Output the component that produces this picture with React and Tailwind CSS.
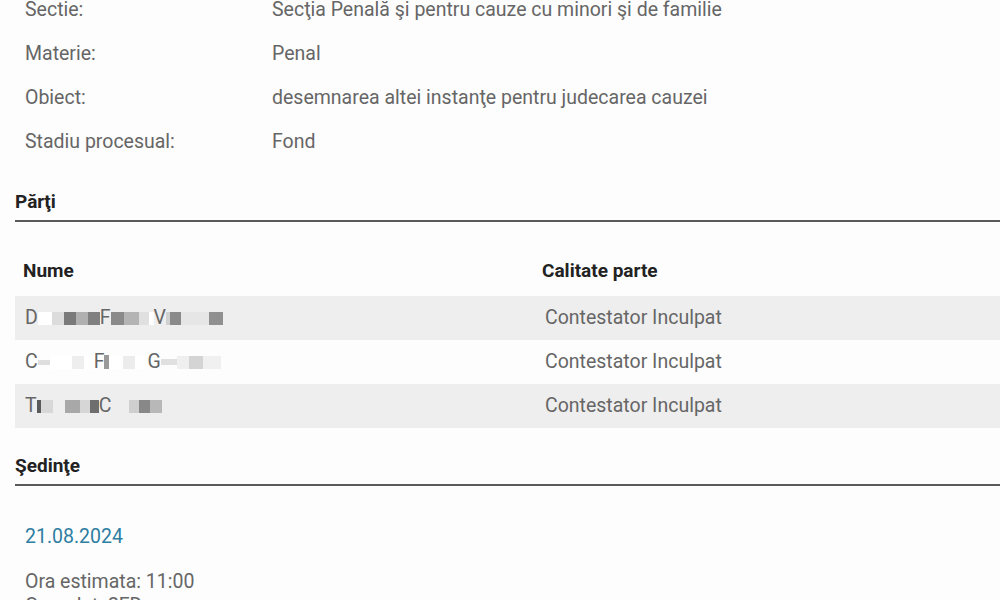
const details = [
  ['Sectie:', 'Secţia Penală şi pentru cauze cu minori şi de familie'],
  ['Materie:', 'Penal'],
  ['Obiect:', 'desemnarea altei instanţe pentru judecarea cauzei'],
  ['Stadiu procesual:', 'Fond'],
];

// names are pixelated in the source, so they are drawn as letters + blur blocks
const parties = [
  {
    name: [
      { t: 'D' }, { w: 14, c: '#fff' }, { w: 12, c: '#dcdcdc' }, { w: 12, c: '#7a7a7a' }, { w: 12, c: '#b0b0b0' }, { w: 12, c: '#808080' },
      { t: 'F' }, { w: 13, c: '#8a8a8a' }, { w: 15, c: '#b4b4b4' }, { w: 10, c: '#e0e0e0' }, { w: 5, c: '#fff' },
      { t: 'V' }, { w: 4, c: '#d0d0d0' }, { w: 11, c: '#8a8a8a' }, { w: 28, c: '#e6e6e6' }, { w: 14, c: '#909090' },
    ],
    role: 'Contestator Inculpat',
  },
  {
    name: [
      { t: 'C' }, { w: 12, c: '#dedede', h: 5 }, { w: 22, c: '#fff' }, { w: 12, c: '#eeeeee' }, { w: 10, c: '#fff' },
      { t: 'F' }, { w: 5, c: '#9a9a9a', h: 14 }, { w: 14, c: '#fff' }, { w: 12, c: '#ececec' }, { w: 12, c: '#fff' },
      { t: 'G' }, { w: 16, c: '#e0e0e0', h: 6 }, { w: 12, c: '#efefef' }, { w: 14, c: '#d4d4d4' }, { w: 18, c: '#f0f0f0' },
    ],
    role: 'Contestator Inculpat',
  },
  {
    name: [
      { t: 'T' }, { w: 4, c: '#5a5a5a' }, { w: 12, c: '#d8d8d8' }, { w: 12, c: '#eeeeee' }, { w: 15, c: '#a8a8a8' }, { w: 10, c: '#d6d6d6' }, { w: 9, c: '#6e6e6e' },
      { t: 'C' }, { w: 18, c: '#eeeeee' }, { w: 10, c: '#cfcfcf' }, { w: 11, c: '#888888' }, { w: 12, c: '#b8b8b8' },
    ],
    role: 'Contestator Inculpat',
  },
];

function SectionTitle({ children }) {
  return (
    <div className="flex h-[58px] items-end border-b-2 border-[#5a5a5a] pb-[6px]">
      <h3 className="text-[19px] font-bold leading-[24px] text-[#222]">{children}</h3>
    </div>
  );
}

function BlurredName({ parts }) {
  return (
    <div className="flex items-center">
      {parts.map((p, i) =>
        p.t ? (
          <span key={i} className="text-[#666]">{p.t}</span>
        ) : (
          <span
            key={i}
            className="inline-block blur-[0.6px]"
            style={{ width: p.w, height: p.h || 13, background: p.c }}
          />
        )
      )}
    </div>
  );
}

export default function App() {
  return (
    <div className="min-h-[600px] w-[1000px] overflow-hidden bg-[#fdfdfd] pl-[15px] font-['Roboto',sans-serif] text-[19.5px] text-[#666]">
      <div className="mt-[-12px]">
        {details.map(([label, value]) => (
          <div key={label} className="flex h-[44px] items-center pl-[10px]">
            <span className="w-[247px] shrink-0">{label}</span>
            <span>{value}</span>
          </div>
        ))}
      </div>

      <SectionTitle>Părţi</SectionTitle>

      <div>
        <div className="flex h-[74px] items-end pb-[13px] text-[19px] font-bold leading-[24px] text-[#222]">
          <span className="w-[519px] shrink-0 pl-[8px]">Nume</span>
          <span className="pl-[8px]">Calitate parte</span>
        </div>
        {parties.map((p, i) => (
          <div key={i} className={`flex h-[44px] items-center ${i % 2 === 0 ? 'bg-[#eeeeee]' : 'bg-[#fdfdfd]'}`}>
            <div className="w-[519px] shrink-0 pl-[10px]">
              <BlurredName parts={p.name} />
            </div>
            <span className="pl-[11px]">{p.role}</span>
          </div>
        ))}
      </div>

      <SectionTitle>Şedinţe</SectionTitle>

      <div className="pl-[10px] leading-[24px]">
        <div className="mt-[39px] text-[#2f7ea3]">21.08.2024</div>
        <div className="mt-[21px]">Ora estimata: 11:00</div>
        <div>Complet: 2FDc</div>
      </div>
    </div>
  );
}
